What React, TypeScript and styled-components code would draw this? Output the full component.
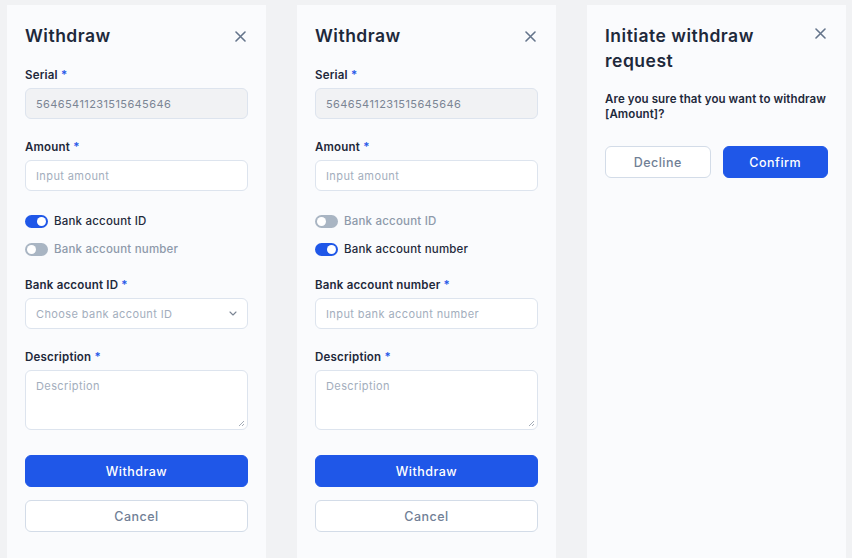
import React from 'react';
import styled, { createGlobalStyle } from 'styled-components';

const palette = {
  page: '#f1f2f4',
  panel: '#fafbfd',
  text: '#1e293b',
  muted: '#64748b',
  placeholder: '#a3aebd',
  border: '#dde4ee',
  blue: '#1f57e8',
  toggleOff: '#a9b5c3',
  disabled: '#f1f2f4',
};

const GlobalStyle = createGlobalStyle`
  html, body {
    margin: 0;
    padding: 0;
    background: ${palette.page};
    overflow: hidden;
  }
  body {
    font-family: Inter, "Noto Sans", sans-serif;
    color: ${palette.text};
  }
  * { box-sizing: border-box; }
`;

const Page = styled.div`
  display: flex;
  align-items: stretch;
  gap: 31px;
  height: 558px;
  padding: 5px 0 0 7px;
`;

const Panel = styled.section`
  width: 259px;
  background: ${palette.panel};
  padding: 18px 18px 0;
  display: flex;
  flex-direction: column;
`;

const Header = styled.div`
  display: flex;
  justify-content: space-between;
  align-items: flex-start;
`;

const Title = styled.h2`
  margin: 0;
  font-size: 17.5px;
  line-height: 25px;
  font-weight: 600;
  letter-spacing: 0.5px;
  color: ${palette.text};
`;

const CloseButton = styled.button<{ $shift: number }>`
  border: 0;
  background: none;
  padding: 0;
  width: 20px;
  height: 20px;
  margin-top: ${(p) => p.$shift}px;
  margin-right: -2px;
  display: flex;
  align-items: center;
  justify-content: center;
  color: ${palette.muted};
`;

const Label = styled.label<{ $top: number }>`
  display: block;
  margin-top: ${(p) => p.$top}px;
  margin-bottom: 5px;
  font-size: 11.5px;
  line-height: 16px;
  font-weight: 600;
  letter-spacing: 0.2px;
  color: ${palette.text};

  span {
    color: ${palette.blue};
  }
`;

const Field = styled.div<{ $disabled?: boolean }>`
  position: relative;
  height: 31px;
  border: 1px solid ${palette.border};
  border-radius: 6px;
  background: ${(p) => (p.$disabled ? palette.disabled : '#fff')};
  display: flex;
  align-items: center;
  justify-content: space-between;
  padding: 0 10px;
  font-size: 11px;
  letter-spacing: 0.4px;
  color: ${(p) => (p.$disabled ? '#7b8594' : palette.placeholder)};
`;

const TextArea = styled.div`
  position: relative;
  height: 60px;
  border: 1px solid ${palette.border};
  border-radius: 6px;
  background: #fff;
  padding: 8px 10px;
  font-size: 11px;
  letter-spacing: 0.4px;
  color: ${palette.placeholder};
`;

const Grip = styled.svg`
  position: absolute;
  right: 2px;
  bottom: 2px;
`;

const ToggleList = styled.div`
  margin-top: 20px;
  display: flex;
  flex-direction: column;
  gap: 8px;
`;

const ToggleRow = styled.div<{ $on: boolean }>`
  display: flex;
  align-items: center;
  gap: 6px;
  height: 20px;
  font-size: 11.5px;
  font-weight: 500;
  letter-spacing: 0.2px;
  color: ${(p) => (p.$on ? palette.text : '#8d99aa')};
`;

const Track = styled.span<{ $on: boolean }>`
  position: relative;
  width: 23px;
  height: 13px;
  border-radius: 7px;
  background: ${(p) => (p.$on ? palette.blue : palette.toggleOff)};

  &::after {
    content: '';
    position: absolute;
    top: 2px;
    left: ${(p) => (p.$on ? '12px' : '2px')};
    width: 9px;
    height: 9px;
    border-radius: 50%;
    background: #fff;
  }
`;

const Button = styled.button<{ $primary?: boolean }>`
  height: 32px;
  width: 100%;
  border-radius: 6px;
  border: 1px solid ${(p) => (p.$primary ? palette.blue : '#d3dce8')};
  background: ${(p) => (p.$primary ? palette.blue : '#fff')};
  color: ${(p) => (p.$primary ? '#fff' : '#718096')};
  font-family: inherit;
  font-size: 12.5px;
  font-weight: 500;
  letter-spacing: 0.5px;
  padding: 0;
`;

const Actions = styled.div`
  margin-top: 25px;
  display: flex;
  flex-direction: column;
  gap: 13px;
`;

const Message = styled.p`
  margin: 19px 0 0;
  font-size: 11.5px;
  line-height: 15px;
  font-weight: 600;
  letter-spacing: 0.1px;
  color: ${palette.text};
`;

const ConfirmRow = styled.div`
  margin-top: 24px;
  display: flex;
  gap: 12px;
`;

const CloseIcon = () => (
  <svg width="11" height="11" viewBox="0 0 11 11" fill="none">
    <path d="M1 1L10 10M10 1L1 10" stroke="currentColor" strokeWidth="1.6" strokeLinecap="round" />
  </svg>
);

const Chevron = () => (
  <svg width="8" height="5" viewBox="0 0 8 5" fill="none">
    <path d="M1 1L4 4L7 1" stroke="#7b8594" strokeWidth="1.1" strokeLinecap="round" strokeLinejoin="round" />
  </svg>
);

type Mode = 'id' | 'number';

const WithdrawPanel = ({ mode }: { mode: Mode }) => (
  <Panel>
    <Header>
      <Title>Withdraw</Title>
      <CloseButton $shift={3}>
        <CloseIcon />
      </CloseButton>
    </Header>

    <Label $top={19}>
      Serial <span>*</span>
    </Label>
    <Field $disabled>56465411231515645646</Field>

    <Label $top={20}>
      Amount <span>*</span>
    </Label>
    <Field>Input amount</Field>

    <ToggleList>
      <ToggleRow $on={mode === 'id'}>
        <Track $on={mode === 'id'} />
        Bank account ID
      </ToggleRow>
      <ToggleRow $on={mode === 'number'}>
        <Track $on={mode === 'number'} />
        Bank account number
      </ToggleRow>
    </ToggleList>

    {mode === 'id' ? (
      <>
        <Label $top={18}>
          Bank account ID <span>*</span>
        </Label>
        <Field>
          Choose bank account ID
          <Chevron />
        </Field>
      </>
    ) : (
      <>
        <Label $top={18}>
          Bank account number <span>*</span>
        </Label>
        <Field>Input bank account number</Field>
      </>
    )}

    <Label $top={20}>
      Description <span>*</span>
    </Label>
    <TextArea>
      Description
      <Grip width="7" height="7" viewBox="0 0 7 7">
        <path d="M6 1L1 6M6 4L4 6" stroke="#9aa3af" strokeWidth="0.9" />
      </Grip>
    </TextArea>

    <Actions>
      <Button $primary>Withdraw</Button>
      <Button>Cancel</Button>
    </Actions>
  </Panel>
);

const ConfirmPanel = () => (
  <Panel>
    <Header>
      <Title>
        Initiate withdraw
        <br />
        request
      </Title>
      <CloseButton $shift={0}>
        <CloseIcon />
      </CloseButton>
    </Header>
    <Message>
      Are you sure that you want to withdraw
      <br />
      [Amount]?
    </Message>
    <ConfirmRow>
      <Button>Decline</Button>
      <Button $primary>Confirm</Button>
    </ConfirmRow>
  </Panel>
);

export default function App() {
  return (
    <>
      <GlobalStyle />
      <Page>
        <WithdrawPanel mode="id" />
        <WithdrawPanel mode="number" />
        <ConfirmPanel />
      </Page>
    </>
  );
}
